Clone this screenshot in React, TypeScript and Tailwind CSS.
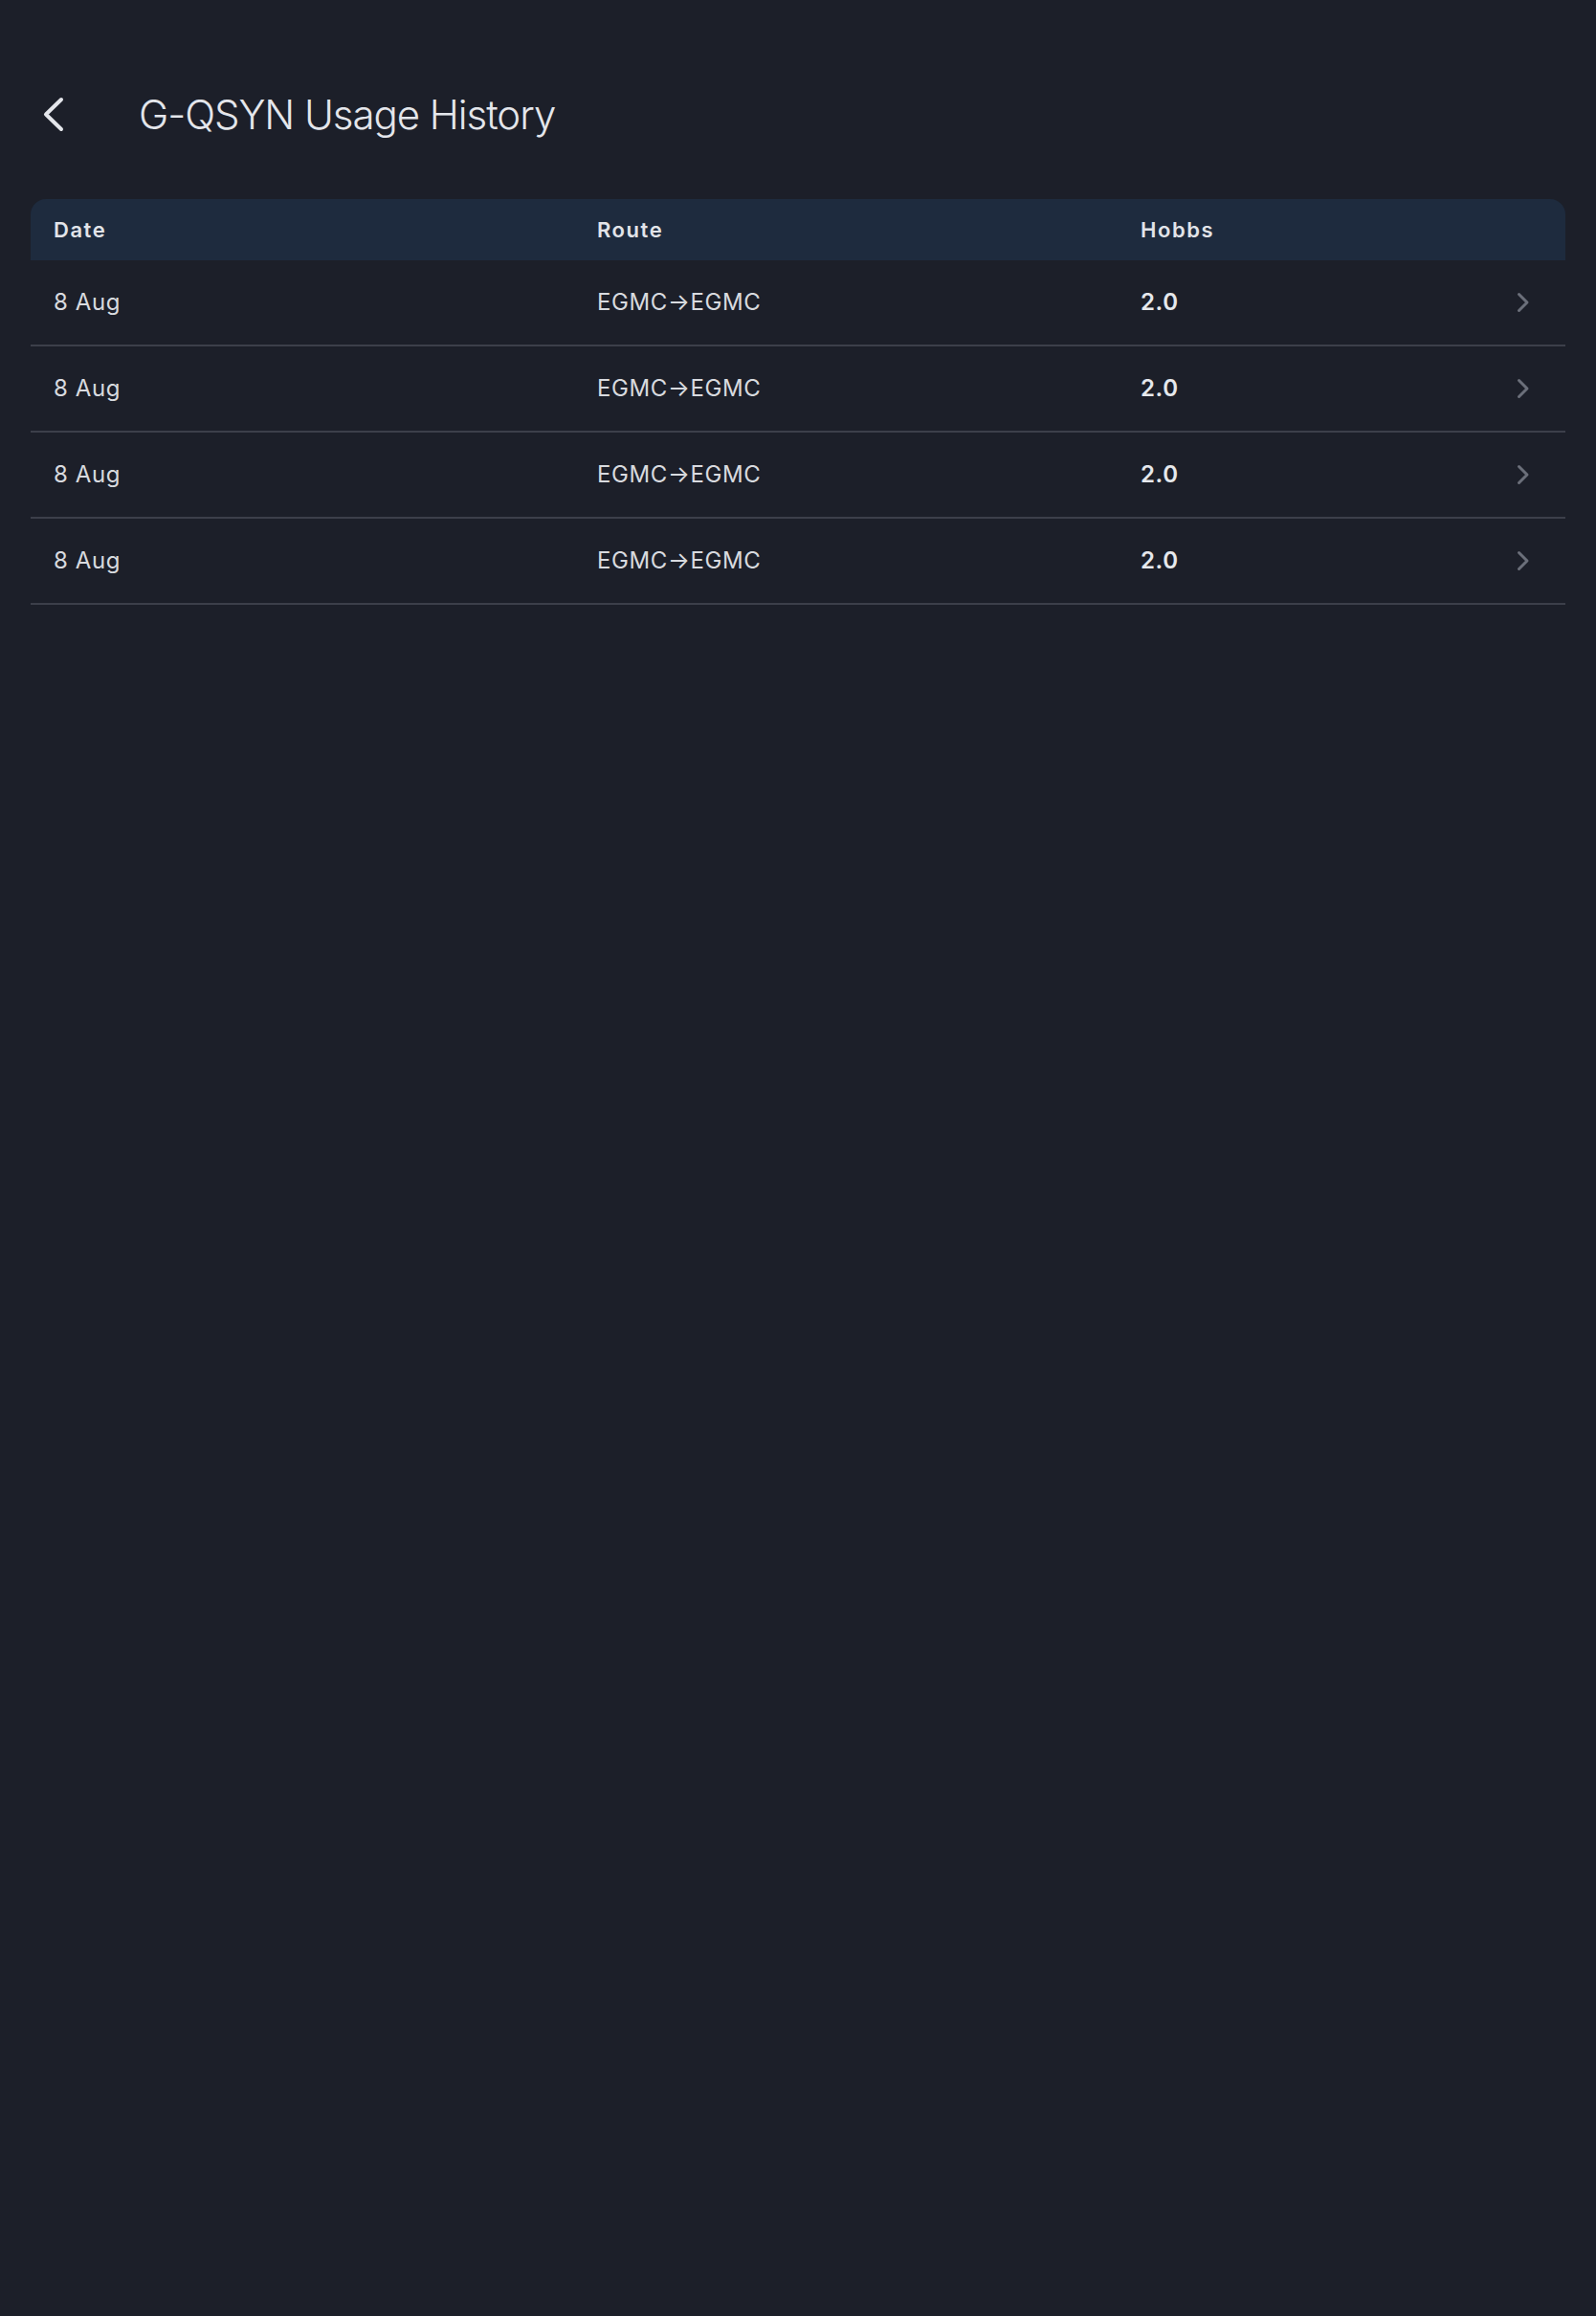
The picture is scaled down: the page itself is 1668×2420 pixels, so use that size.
import React from "react";

const rows = [
  { date: "8 Aug", route: "EGMC→EGMC", hobbs: "2.0" },
  { date: "8 Aug", route: "EGMC→EGMC", hobbs: "2.0" },
  { date: "8 Aug", route: "EGMC→EGMC", hobbs: "2.0" },
  { date: "8 Aug", route: "EGMC→EGMC", hobbs: "2.0" },
];

export default function App() {
  return (
    <div
      className="min-h-[2420px] w-full bg-[#1c1f29] text-[#e4e6eb]"
      style={{ fontFamily: "Inter, 'Noto Sans', sans-serif" }}
    >
      <div className="px-8 pt-[80px]">
        <div className="flex h-[80px] items-center">
          <div className="flex w-[113px] items-center pl-3">
            <svg width="24" height="40" viewBox="0 0 24 40" fill="none">
              <polyline
                points="20,4 4,19.5 20,35"
                stroke="#e4e6eb"
                strokeWidth="4"
                strokeLinecap="round"
                strokeLinejoin="round"
              />
            </svg>
          </div>
          <h1 className="text-[42px] font-light leading-none tracking-[-0.025em] text-[#e4e6eb]">
            G-QSYN Usage History
          </h1>
        </div>

        <div className="mt-[48px]">
          <div className="grid h-[64px] grid-cols-[568px_568px_1fr_16px] items-center rounded-t-[16px] bg-[#1e2b3e] pl-6 pr-9 text-[22px] font-semibold tracking-[0.07em] text-[#e2e4e9]">
            <div>Date</div>
            <div>Route</div>
            <div>Hobbs</div>
            <div />
          </div>
          {rows.map((r, i) => (
            <div
              key={i}
              className="grid h-[90px] grid-cols-[568px_568px_1fr_16px] items-center border-b-2 border-[#3c3f4a] pl-6 pr-9 text-[24px] tracking-wide text-[#d8dadf]"
            >
              <div>{r.date}</div>
              <div>{r.route}</div>
              <div className="font-semibold text-[#e6e8ec]">{r.hobbs}</div>
              <div className="flex items-center justify-end">
                <svg width="16" height="24" viewBox="0 0 16 24" fill="none">
                  <polyline
                    points="3.5,3.5 12,12 3.5,20.5"
                    stroke="#6b6f7a"
                    strokeWidth="3"
                    strokeLinecap="round"
                    strokeLinejoin="round"
                  />
                </svg>
              </div>
            </div>
          ))}
        </div>
      </div>
    </div>
  );
}
